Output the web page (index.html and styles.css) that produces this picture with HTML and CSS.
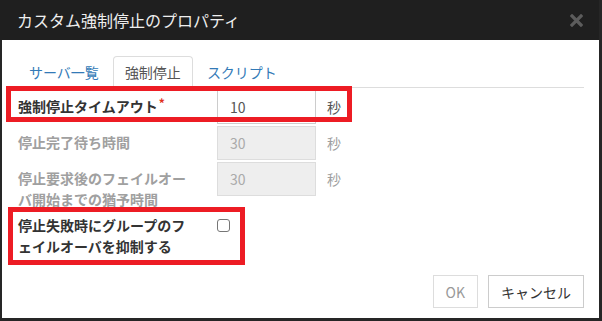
FILE: index.html
```html
<!DOCTYPE html>
<html lang="ja">

<head>
    <meta charset="UTF-8">
    <title>カスタム強制停止のプロパティ</title>
    <link rel="stylesheet" href="styles.css">
</head>

<body>
    <div class="dialog">
        <!-- ヘッダー -->
        <div class="dialog-header">
            <span class="dialog-title">カスタム強制停止のプロパティ</span>
            <svg class="close" width="13" height="13" viewBox="0 0 13 13">
                <path d="M2 2 L11 11 M11 2 L2 11" stroke="#5c5c5c" stroke-width="3.2" stroke-linecap="square" />
            </svg>
        </div>

        <div class="dialog-body">
            <!-- タブ -->
            <ul class="tabs">
                <li><a>サーバ一覧</a></li>
                <li class="active"><a>強制停止</a></li>
                <li><a>スクリプト</a></li>
            </ul>

            <!-- フォーム -->
            <div class="form">
                <div class="row">
                    <label class="label">強制停止タイムアウト<span class="req">*</span></label>
                    <input type="text" class="field" value="10">
                    <span class="unit">秒</span>
                </div>
                <div class="row disabled">
                    <label class="label">停止完了待ち時間</label>
                    <input type="text" class="field" value="30" disabled>
                    <span class="unit">秒</span>
                </div>
                <div class="row disabled">
                    <label class="label">停止要求後のフェイルオーバ開始までの猶予時間</label>
                    <input type="text" class="field" value="30" disabled>
                    <span class="unit">秒</span>
                </div>
                <div class="row check-row">
                    <label class="label">停止失敗時にグループのフェイルオーバを抑制する</label>
                    <input type="checkbox" class="check">
                </div>
            </div>

            <!-- ボタン -->
            <div class="footer">
                <button class="btn" disabled>OK</button>
                <button class="btn">キャンセル</button>
            </div>
        </div>

        <!-- 赤枠 -->
        <div class="mark mark-1"></div>
        <div class="mark mark-2"></div>
    </div>
</body>

</html>
```

FILE: styles.css
```css
/* 全体 */
body {
    margin: 0;
    background: #262626;
    font-family: "Noto Sans CJK JP", "Noto Sans", sans-serif;
    font-size: 14px;
    color: #333;
}

.dialog {
    position: relative;
    width: 599px;
    height: 318px;
}

/* ヘッダー */
.dialog-header {
    height: 40px;
    background: #1f1f1f;
    display: flex;
    align-items: center;
    justify-content: space-between;
    padding: 0 16px 0 17px;
    box-sizing: border-box;
}

.dialog-title {
    font-size: 16px;
    color: #eeeeee;
    line-height: 1;
}

.close {
    display: block;
}

/* 本体 */
.dialog-body {
    margin-left: 2px;
    height: 278px;
    background: #ffffff;
    padding: 16px 15px 10px 10px;
    box-sizing: border-box;
    display: flex;
    flex-direction: column;
}

/* タブ */
.tabs {
    list-style: none;
    margin: 0;
    padding: 0 0 0 5px;
    display: flex;
    border-bottom: 1px solid #dddddd;
}

.tabs li {
    margin-right: 2px;
    margin-bottom: -1px;
}

.tabs a {
    display: block;
    padding: 0 11px;
    height: 30px;
    line-height: 30px;
    color: #337ab7;
    border: 1px solid transparent;
    border-bottom: none;
    border-radius: 4px 4px 0 0;
}

.tabs li.active a {
    color: #555555;
    background: #ffffff;
    border-color: #dddddd;
    height: 31px;
}

/* フォーム */
.form {
    padding: 2px 0 0 6px;
}

.row {
    display: flex;
    align-items: flex-start;
    margin-bottom: 2px;
}

.label {
    flex: 0 0 175px;
    margin-right: 24px;
    padding-top: 6px;
    line-height: 21px;
    font-weight: bold;
    line-break: loose;
}

.req {
    color: #e0301e;
    font-size: 12px;
    vertical-align: top;
    position: relative;
    top: -4px;
    margin-left: 1px;
}

.field {
    width: 99px;
    height: 34px;
    box-sizing: border-box;
    border: 1px solid #cccccc;
    padding: 0 12px;
    font-family: inherit;
    font-size: 14px;
    color: #555555;
    background: #ffffff;
    margin: 0;
}

.field:disabled {
    background: #eeeeee;
    border-color: #dddddd;
    color: #aaaaaa;
}

.unit {
    margin-left: 11px;
    line-height: 34px;
    color: #555555;
}

.row.disabled .label,
.row.disabled .unit {
    color: #a0a0a0;
}

.check-row .label {
    padding-top: 3px;
}

.check {
    appearance: none;
    width: 13px;
    height: 13px;
    margin: 7px 0 0 0;
    border: 1px solid #767676;
    border-radius: 3px;
    background: #ffffff;
}

/* ボタン */
.footer {
    margin-top: auto;
    display: flex;
    justify-content: flex-end;
    gap: 10px;
}

.btn {
    height: 33px;
    padding: 0 12px;
    font-family: inherit;
    font-size: 14px;
    color: #333333;
    background: #ffffff;
    border: 1px solid #cccccc;
    border-radius: 0;
}

.btn:disabled {
    color: #999999;
    border-color: #dddddd;
}

/* 赤枠 */
.mark {
    position: absolute;
    border: 5px solid #ed1c24;
    box-sizing: border-box;
}

.mark-1 {
    left: 6px;
    top: 86px;
    width: 346px;
    height: 36px;
}

.mark-2 {
    left: 8px;
    top: 207px;
    width: 237px;
    height: 58px;
}
```
